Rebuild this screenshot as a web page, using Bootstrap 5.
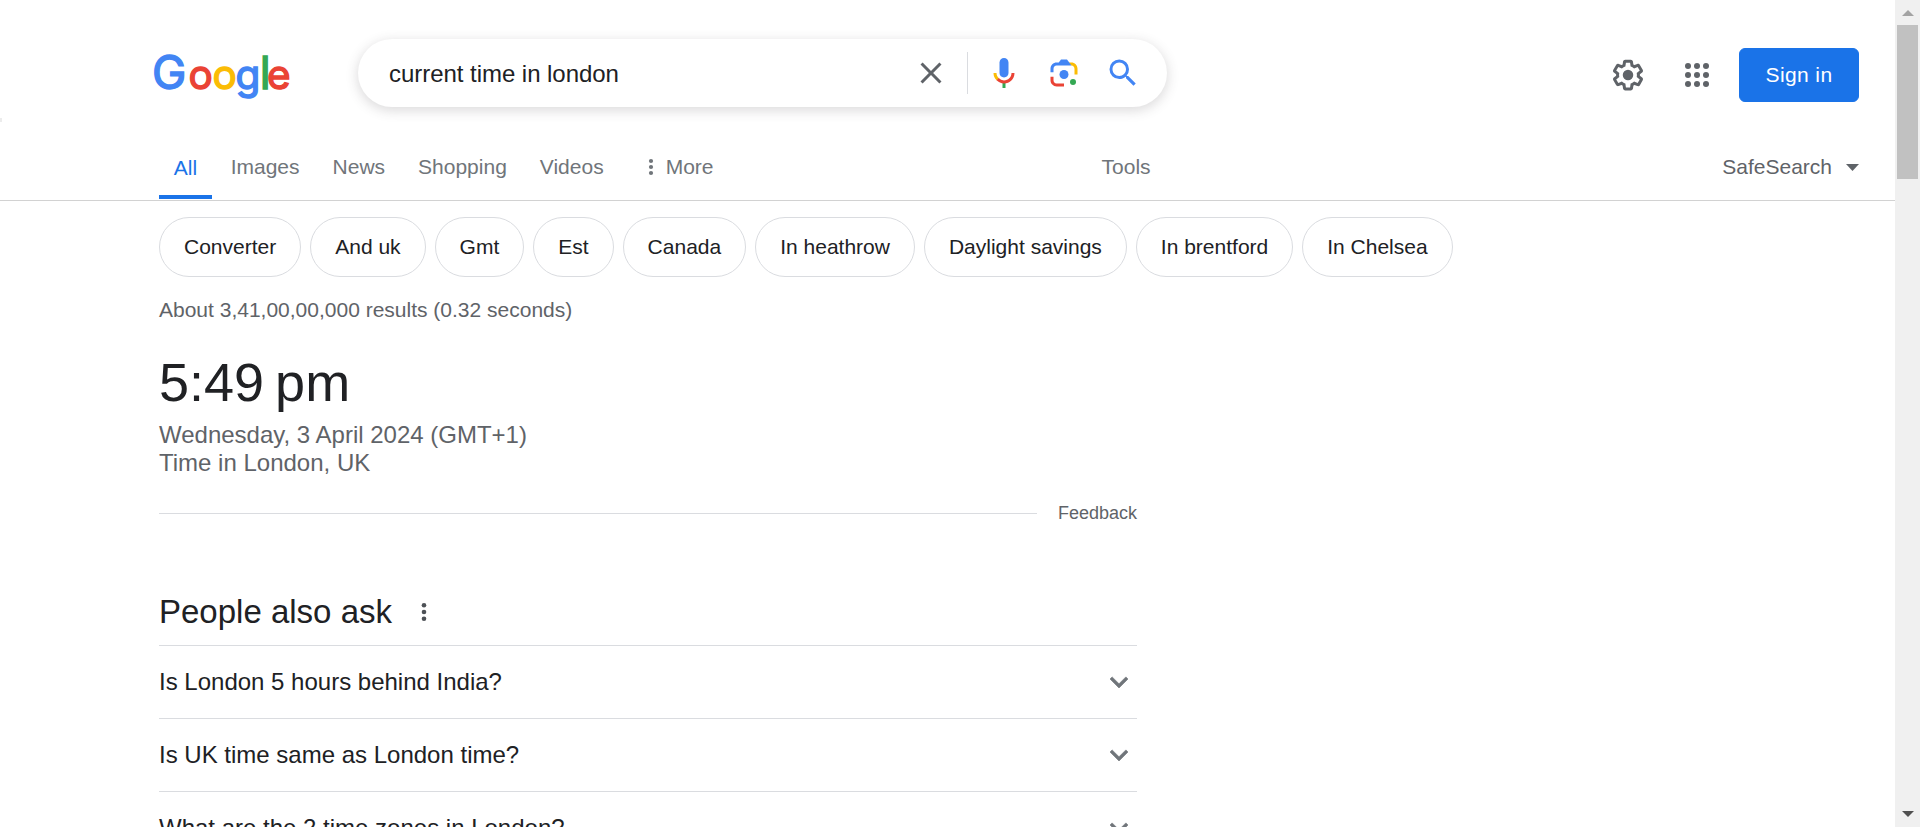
<!DOCTYPE html>
<html lang="en">
<head>
<meta charset="utf-8">
<title>current time in london - Google Search</title>
<meta name="viewport" content="width=device-width, initial-scale=1">
<link href="https://cdn.jsdelivr.net/npm/bootstrap@5.3.0/dist/css/bootstrap.min.css" rel="stylesheet">
<style>
  body { font-family: "Liberation Sans", Arial, sans-serif; font-size: 21px; line-height: 24px; color: #202124; background: #fff; }
  svg { display: block; flex: none; }
  .page { height: 827px; }
  .topbar { height: 147px; padding: 39px 36px 0 153px; }
  .logo { width: 137px; height: 60px; margin-top: 4px; overflow: visible; font-family: Inter, sans-serif; font-size: 40.5px; }
  .searchbox { width: 809px; height: 68px; margin-left: 68px; padding: 0 26.5px 0 31px; border-radius: 34px; box-shadow: 0 3px 12px 1px rgba(64,60,67,.18); }
  .searchbox .query { font-size: 24px; border: 0; outline: 0; background: transparent; color: #202124; padding: 2px 0 0; min-width: 0; letter-spacing: -.04px; }
  .split { width: 1px; height: 42px; background: #dadce0; margin: 0 18px; }
  .account { margin-top: 9px; height: 54px; }
  .signin { --bs-btn-bg: #1a73e8; --bs-btn-border-color: #1a73e8; width: 120px; height: 54px; font-size: 21px; letter-spacing: .4px; border-radius: 6px; padding: 0; }
  .tabs { height: 54px; padding: 0 36px 0 159px; border-bottom: 1px solid #d2d2d2; color: #70757a; }
  .tabs .nav-link { padding: 8px 0 0; color: inherit; font-size: 21px; }
  .tabs .active { width: 53px; height: 52px; padding-top: 9px; margin-right: 18.7px; color: #1a73e8; border-bottom: 4px solid #1a73e8; text-align: center; }
  .tabs .links { gap: 33px; }
  .results { padding-left: 159px; }
  .chips { gap: 9px; padding-top: 16px; }
  .chip { height: 60px; padding: 0 24px; border: 1px solid #dadce0; border-radius: 30px; }
  .stats { margin-top: 21px; color: #5f6368; }
  .col-main { width: 978px; }
  .clock { font-size: 54px; line-height: 60px; margin-top: 30px; word-spacing: -4px; }
  .zone { font-size: 24px; line-height: 28px; margin-top: 9px; color: #5f6368; }
  .feedback { font-size: 18px; line-height: 20px; margin-top: 26px; gap: 21px; color: #5f6368; }
  .rule { height: 1px; background: #dadce0; }
  .ask { font-size: 33px; line-height: 40px; margin-top: 69px; padding-bottom: 13px; }
  .question { height: 73px; border-top: 1px solid #dadce0; font-size: 24px; line-height: 28px; }
  .scroll { width: 25px; background: #f0f0f0; padding: 10px 0; }
  .thumb { width: 21px; height: 154px; margin-top: 9px; background: #c1c1c1; }
  .edge { left: 0; top: 118px; width: 2px; height: 4px; background: #ececec; }
</style>
</head>
<body class="overflow-hidden">
<div class="page d-flex overflow-hidden position-relative">
  <span class="edge position-absolute"></span>
  <div class="flex-grow-1 overflow-hidden">
    <header class="topbar d-flex align-items-start">
      <svg class="logo" viewBox="0 0 137 60" role="img" aria-label="Google">
        <text y="45.5" x="-.9 35.4 59.6 82.6 106.8 114" stroke-width="1.4"><tspan fill="#4285f4" stroke="#4285f4" font-size="46">G</tspan><tspan fill="#ea4335" stroke="#ea4335">o</tspan><tspan fill="#fbbc05" stroke="#fbbc05">o</tspan><tspan fill="#4285f4" stroke="#4285f4">g</tspan><tspan fill="#34a853" stroke="#34a853" font-size="45">l</tspan><tspan fill="#ea4335" stroke="#ea4335">e</tspan></text>
      </svg>
      <form class="searchbox d-flex align-items-center">
        <input class="query flex-grow-1" value="current time in london" aria-label="Search">
        <svg width="36" height="36" viewBox="0 0 24 24" fill="#5f6368"><path d="M19 6.41 17.59 5 12 10.59 6.41 5 5 6.41 10.59 12 5 17.59 6.41 19 12 13.41 17.59 19 19 17.59 13.41 12z"/></svg>
        <span class="split"></span>
        <svg width="36" height="36" viewBox="0 0 24 24"><path fill="#4285f4" d="M12 15c1.66 0 3-1.31 3-2.97V5.01C15 3.35 13.66 2 12 2S9 3.34 9 5.01v7.02C9 13.69 10.34 15 12 15z"/><path fill="#34a853" d="M11 18.08h2V22h-2z"/><path fill="#fbbc04" d="M7.05 16.87C5.78 15.54 5 14.04 5 12h2c0 1.45.56 2.42 1.47 3.38v.32l-1.15 1.18z"/><path fill="#ea4335" d="M12 16.93a4.97 5.25 0 0 1-3.54-1.55l-1.41 1.49C8.31 18.21 10.07 19 12 19c3.87 0 6.99-2.92 6.99-7H17c0 2.92-2.24 4.93-5 4.93z"/></svg>
        <svg width="36" height="36" viewBox="0 0 192 192" style="margin:0 22.5px 0 24px"><circle cx="144" cy="144" r="16" fill="#34a853"/><circle cx="96" cy="104" r="24" fill="#4285f4"/><path fill="#ea4335" d="M24 135.2C24 153.31 38.69 168 56.8 168H96v-16l-40.1-.1c-8.8 0-15.9-8.19-15.9-17.9v-18H24z"/><path fill="#fbbc04" d="M168 72.8c0-18.11-14.69-32.8-32.8-32.8H116l20 16c8.8 0 16 8.29 16 18v30h16z"/><path fill="#4285f4" d="M112 24H80L68 40H56.8C38.69 40 24 54.69 24 72.8V92h16V74c0-9.71 7.2-18 16-18h80z"/></svg>
        <svg width="36" height="36" viewBox="0 0 24 24" fill="#4285f4"><path d="M15.5 14h-.79l-.28-.27A6.471 6.471 0 0 0 16 9.5 6.5 6.5 0 1 0 9.5 16c1.61 0 3.09-.59 4.23-1.57l.27.28v.79l5 4.99L20.49 19zm-6 0C7.01 14 5 11.99 5 9.5S7.01 5 9.5 5 14 7.01 14 9.5 11.99 14 9.5 14z"/></svg>
      </form>
      <div class="account d-flex align-items-center ms-auto">
        <svg width="36" height="36" viewBox="0 0 24 24" fill="#5f6368"><path d="M13.85 22.25h-3.7c-.74 0-1.36-.54-1.45-1.27l-.27-1.89c-.27-.14-.53-.29-.79-.46l-1.8.72c-.7.26-1.47-.03-1.81-.65L2.2 15.53c-.35-.66-.2-1.44.36-1.88l1.53-1.19c-.01-.15-.02-.3-.02-.46 0-.15.01-.31.02-.46l-1.52-1.19c-.59-.45-.74-1.26-.37-1.88l1.85-3.19c.34-.62 1.11-.9 1.79-.63l1.81.73c.26-.17.52-.32.78-.46l.27-1.91c.09-.7.71-1.25 1.44-1.25h3.7c.74 0 1.36.54 1.45 1.27l.27 1.89c.27.14.53.29.79.46l1.8-.72c.71-.26 1.48.03 1.82.65l1.84 3.18c.36.66.2 1.44-.36 1.88l-1.52 1.19c.01.15.02.3.02.46s-.01.31-.02.46l1.52 1.19c.56.45.72 1.23.37 1.86l-1.86 3.22c-.34.62-1.11.9-1.8.63l-1.8-.72c-.26.17-.52.32-.78.46l-.27 1.91c-.1.68-.72 1.22-1.46 1.22zm-3.23-2h2.76l.37-2.55.53-.22c.44-.18.88-.44 1.34-.78l.45-.34 2.38.96 1.38-2.4-2.03-1.58.07-.56c.03-.26.06-.51.06-.78s-.03-.53-.06-.78l-.07-.56 2.03-1.58-1.39-2.4-2.39.96-.45-.35c-.42-.32-.87-.58-1.33-.77l-.52-.22-.37-2.55h-2.76l-.37 2.55-.53.21c-.44.19-.88.44-1.34.79l-.45.33-2.38-.95-1.39 2.39 2.03 1.58-.07.56a7 7 0 0 0-.06.79c0 .26.02.53.06.78l.07.56-2.03 1.58 1.38 2.4 2.39-.96.45.35c.43.33.86.58 1.33.77l.53.22z"/><circle cx="12" cy="12" r="3.5"/></svg>
        <svg width="36" height="36" viewBox="0 0 24 24" fill="#5f6368" style="margin:0 24px 0 33px"><circle cx="6" cy="6" r="2"/><circle cx="12" cy="6" r="2"/><circle cx="18" cy="6" r="2"/><circle cx="6" cy="12" r="2"/><circle cx="12" cy="12" r="2"/><circle cx="18" cy="12" r="2"/><circle cx="6" cy="18" r="2"/><circle cx="12" cy="18" r="2"/><circle cx="18" cy="18" r="2"/></svg>
        <button class="signin btn btn-primary" type="button">Sign in</button>
      </div>
    </header>

    <nav class="tabs d-flex align-items-start">
      <a class="nav-link active" href="#">All</a>
      <div class="links d-flex">
        <a class="nav-link" href="#">Images</a>
        <a class="nav-link" href="#">News</a>
        <a class="nav-link" href="#">Shopping</a>
        <a class="nav-link" href="#">Videos</a>
      </div>
      <a class="nav-link d-flex align-items-center" href="#" style="margin-left:38px">
        <svg width="18" height="24" viewBox="0 0 18 24" fill="#70757a"><circle cx="9" cy="6" r="2.1"/><circle cx="9" cy="12" r="2.1"/><circle cx="9" cy="18" r="2.1"/></svg>
        <span style="margin-left:6px">More</span>
      </a>
      <a class="nav-link" href="#" style="margin-left:388px">Tools</a>
      <a class="nav-link ms-auto d-flex align-items-center" href="#" style="color:#5f6368">SafeSearch
        <svg width="13" height="7" viewBox="0 0 13 7" fill="#5f6368" style="margin:1px 0 0 14px"><path d="M0 0h13L6.5 7z"/></svg>
      </a>
    </nav>

    <main class="results">
      <div class="chips d-flex">
        <a class="chip d-flex align-items-center text-reset text-decoration-none" href="#">Converter</a>
        <a class="chip d-flex align-items-center text-reset text-decoration-none" href="#">And uk</a>
        <a class="chip d-flex align-items-center text-reset text-decoration-none" href="#">Gmt</a>
        <a class="chip d-flex align-items-center text-reset text-decoration-none" href="#">Est</a>
        <a class="chip d-flex align-items-center text-reset text-decoration-none" href="#">Canada</a>
        <a class="chip d-flex align-items-center text-reset text-decoration-none" href="#">In heathrow</a>
        <a class="chip d-flex align-items-center text-reset text-decoration-none" href="#">Daylight savings</a>
        <a class="chip d-flex align-items-center text-reset text-decoration-none" href="#">In brentford</a>
        <a class="chip d-flex align-items-center text-reset text-decoration-none" href="#">In Chelsea</a>
      </div>
      <div class="col-main">
        <div class="stats">About 3,41,00,00,000 results (0.32 seconds)</div>
        <div class="clock">5:49 pm</div>
        <div class="zone">Wednesday, 3 April 2024 (GMT+1)<br>Time in London, UK</div>
        <div class="feedback d-flex align-items-center"><span class="rule flex-grow-1"></span><span>Feedback</span></div>
        <div class="ask d-flex align-items-center">People also ask
          <svg width="18" height="24" viewBox="0 0 18 24" fill="#4d5156" style="margin-left:23px"><circle cx="9" cy="5.2" r="2.3"/><circle cx="9" cy="12" r="2.3"/><circle cx="9" cy="18.8" r="2.3"/></svg>
        </div>
        <div class="question d-flex align-items-center justify-content-between">Is London 5 hours behind India?
          <svg width="36" height="36" viewBox="0 0 24 24" fill="#70757a" stroke="#70757a" stroke-width=".4"><path d="M7.41 8.59 12 13.17l4.59-4.58L18 10l-6 6-6-6z"/></svg></div>
        <div class="question d-flex align-items-center justify-content-between">Is UK time same as London time?
          <svg width="36" height="36" viewBox="0 0 24 24" fill="#70757a" stroke="#70757a" stroke-width=".4"><path d="M7.41 8.59 12 13.17l4.59-4.58L18 10l-6 6-6-6z"/></svg></div>
        <div class="question d-flex align-items-center justify-content-between">What are the 2 time zones in London?
          <svg width="36" height="36" viewBox="0 0 24 24" fill="#70757a" stroke="#70757a" stroke-width=".4"><path d="M7.41 8.59 12 13.17l4.59-4.58L18 10l-6 6-6-6z"/></svg></div>
      </div>
    </main>
  </div>
  <aside class="scroll d-flex flex-column align-items-center flex-shrink-0">
    <svg width="12" height="6" viewBox="0 0 12 6" fill="#a3a3a3"><path d="M0 6h12L6 0z"/></svg>
    <div class="thumb"></div>
    <svg class="mt-auto" width="12" height="6" viewBox="0 0 12 6" fill="#505050"><path d="M0 0h12L6 6z"/></svg>
  </aside>
</div>
<script src="https://cdn.jsdelivr.net/npm/bootstrap@5.3.0/dist/js/bootstrap.bundle.min.js"></script>
</body>
</html>
